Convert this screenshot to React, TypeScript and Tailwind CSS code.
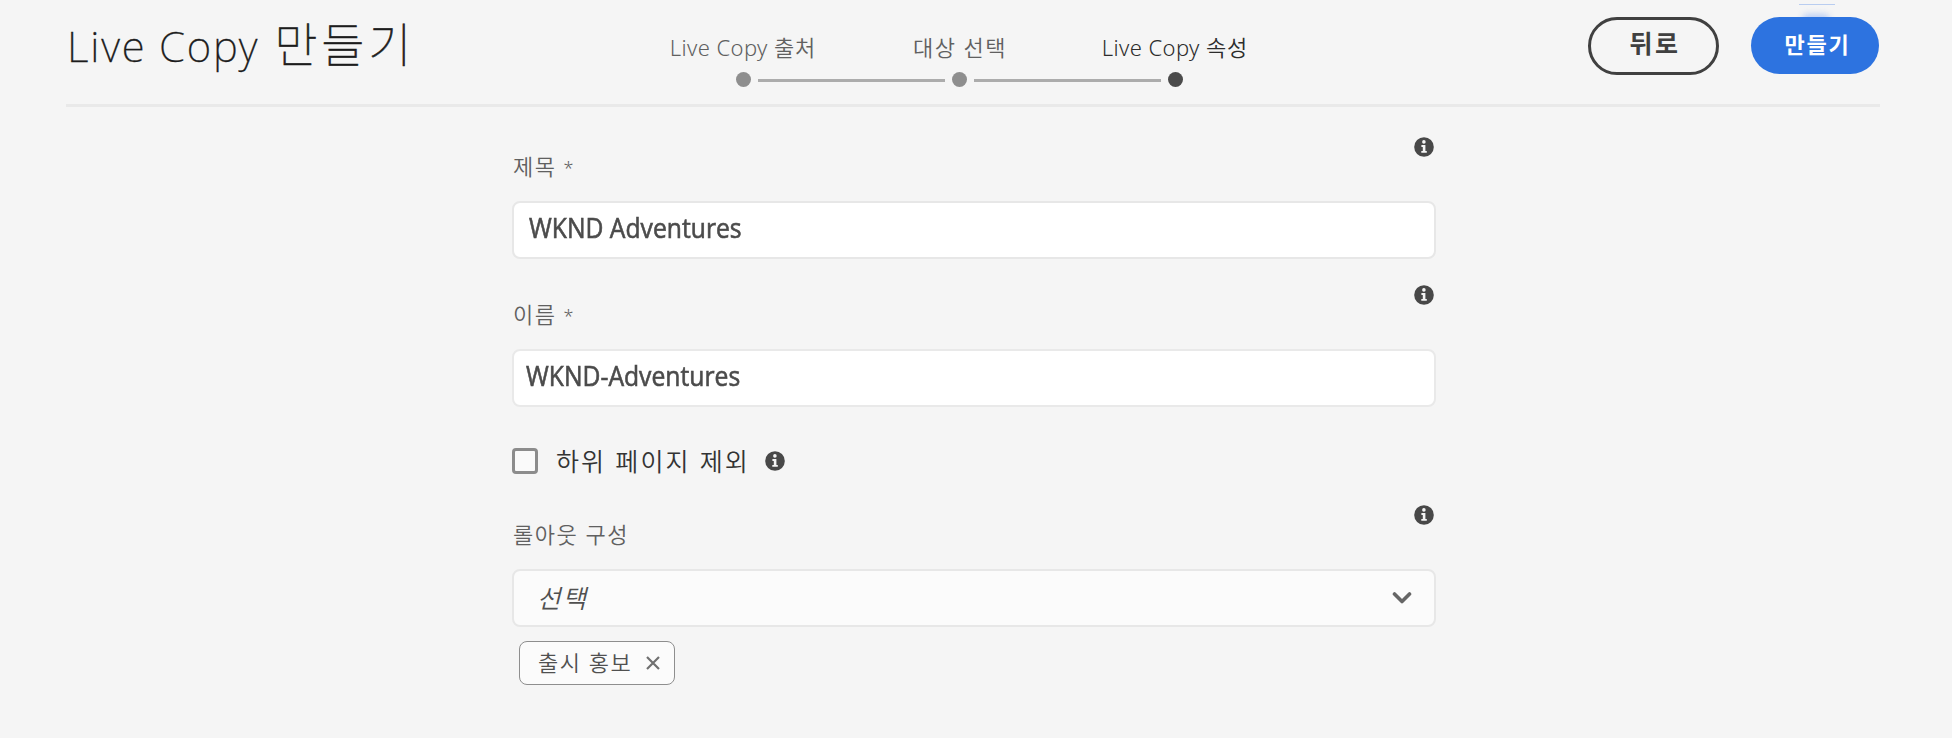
import type { ReactNode } from "react";

function InfoIcon() {
  return (
    <svg viewBox="0 0 20 20" className="block h-5 w-5 shrink-0">
      <circle cx="10" cy="10" r="9.8" fill="#484848" />
      <circle cx="9.9" cy="4.9" r="1.8" fill="#f5f5f5" />
      <path d="M7.4 8.1h4v5.9h1.4v1.8H7.3V14h1.5V9.9H7.4z" fill="#f5f5f5" />
    </svg>
  );
}

function Step({ label, active }: { label: ReactNode; active?: boolean }) {
  return (
    <li className="flex w-[216px] flex-col items-center">
      <span
        className={`h-[30px] whitespace-nowrap text-[22px] leading-[30px] ${active ? "text-[#2c2c2c]" : "text-[#606060]"}`}
      >
        {label}
      </span>
      <span className={`mt-[10px] h-[15px] w-[15px] rounded-full ${active ? "bg-[#4b4b4b]" : "bg-[#8e8e8e]"}`} />
    </li>
  );
}

function FieldHeader({ children, required }: { children: ReactNode; required?: boolean }) {
  return (
    <div className="flex h-16 items-start justify-between pr-[2px]">
      <span className="mt-[14px] h-[30px] whitespace-nowrap pl-px text-[22px] leading-[30px] tracking-[1.5px] text-[#606060]">
        {children}
        {required && <span className="ml-[7px] text-[18px]">*</span>}
      </span>
      <InfoIcon />
    </div>
  );
}

function InputText({ children }: { children: ReactNode }) {
  return (
    <span className="origin-left scale-x-[0.932] whitespace-nowrap font-['Open_Sans'] text-[26.5px] font-normal text-[#4b4b4b] [-webkit-text-stroke:0.6px_#4b4b4b]">
      {children}
    </span>
  );
}

export default function App() {
  return (
    <div className="h-[738px] w-[1952px] overflow-hidden bg-[#f5f5f5] font-['Noto_Sans','Noto_Sans_CJK_KR',sans-serif] font-[350]">
      <header className="ml-[66px] flex h-[107px] w-[1814px] border-b-[3px] border-[#e9e9e9]">
        <h1 className="flex w-[569px] pl-[1px] pt-[12px] text-[42px] leading-[60px] whitespace-nowrap text-[#1c1c1c]">
          <span className="mt-[4px] font-extralight tracking-[1.8px] [-webkit-text-stroke:0.3px_#1c1c1c]">Live Copy</span>
          <span className="ml-[15px] font-['Noto_Sans_CJK_KR'] text-[47px] font-thin tracking-[3.8px] [-webkit-text-stroke:0.6px_#1c1c1c]">만들기</span>
        </h1>
        <ol className="relative flex w-[648px] pt-[32px]">
          <Step label={<span className="tracking-[0.4px]">Live Copy <span className="tracking-[0.9px]">출처</span></span>} />
          <Step label={<span className="ml-[2px] tracking-[1.5px]">대상 선택</span>} />
          <Step label={<span className="tracking-[0.4px]">Live Copy <span className="tracking-[0.9px]">속성</span></span>} active />
          <li className="absolute top-[79px] left-[123px] h-[3px] w-[187px] bg-[#acacac]" />
          <li className="absolute top-[79px] left-[339px] h-[3px] w-[187px] bg-[#acacac]" />
        </ol>
        <div className="relative ml-auto flex items-start gap-[32px] pt-[17px] pr-[1px]">
          <span className="absolute top-[4px] right-[45px] h-px w-[36px] bg-[#b9cdf0]" />
          <span className="absolute top-[14px] right-[50px] h-[12px] w-[28px] rounded-full bg-[#b9cdf4] blur-[3px]" />
          <button className="h-[58px] w-[131px] rounded-full border-[3px] border-[#404040] pb-[5px] pl-[3px] text-[25px] font-bold tracking-[2.5px] text-[#404040]">
            뒤로
          </button>
          <button className="relative h-[57px] w-[128px] rounded-full bg-[#2d73e0] pb-[2px] pl-[5px] text-[22px] font-bold tracking-[1.8px] text-white">
            만들기
          </button>
        </div>
      </header>

      <main className="ml-[512px] w-[924px] pt-[30px]">
        <FieldHeader required>제목</FieldHeader>
        <div className="flex h-[58px] items-center rounded-[8px] border-2 border-[#e7e7e7] bg-white pl-[15px] pb-[2px]">
          <InputText>WKND Adventures</InputText>
        </div>
        <div className="h-[26px]" />
        <FieldHeader required>이름</FieldHeader>
        <div className="flex h-[58px] items-center rounded-[8px] border-2 border-[#e9e9e9] bg-white pl-[12px] pb-[3px]">
          <InputText>WKND-Adventures</InputText>
        </div>
        <div className="mt-[41px] flex h-[26px] items-center">
          <span className="h-[26px] w-[26px] rounded-[4px] border-[3px] border-[#8c8c8c] bg-[#fafafa]" />
          <span className="ml-[18px] w-[209px] whitespace-nowrap text-[25px] leading-[26px] tracking-[2.1px] [word-spacing:0.5px] text-[#333]">하위 페이지 제외</span>
          <InfoIcon />
        </div>
        <div className="h-[31px]" />
        <FieldHeader>롤아웃 구성</FieldHeader>
        <div className="flex h-[58px] items-center rounded-[8px] border-2 border-[#e7e7e7] bg-[#fbfbfb] pr-[22px] pl-[23px] text-[25.5px] tracking-[2px] text-[#505050]">
          <span className="italic">선택</span>
          <svg viewBox="0 0 20 14" className="-mt-px ml-auto h-[14px] w-[20px]" fill="none" stroke="#666" strokeWidth="3.6" strokeLinecap="round" strokeLinejoin="round">
            <path d="M2.5 3 10 10.5 17.5 3" />
          </svg>
        </div>
        <div className="mt-[14px] ml-[7px] flex h-[44px] w-[156px] items-center rounded-[8px] border border-[#8e8e8e] bg-[#fbfbfb] pr-[14px] pb-px pl-[18px] text-[22px] text-[#505050]">
          <span className="whitespace-nowrap tracking-[1.5px]">출시 홍보</span>
          <svg viewBox="0 0 14 14" className="ml-auto h-[14px] w-[14px]" fill="none" stroke="#707070" strokeWidth="2.2">
            <path d="M1 1 13 13M13 1 1 13" />
          </svg>
        </div>
      </main>
    </div>
  );
}
